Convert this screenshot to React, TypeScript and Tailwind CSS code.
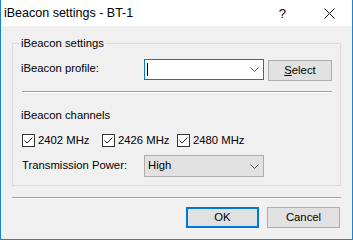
import React from "react";

const Check = () => (
  <span className="w-[13px] h-[13px] border border-[#333333] bg-white flex items-center justify-center shrink-0">
    <svg width="11" height="11" viewBox="0 0 11 11">
      <path d="M1.5 5.5 L4 8 L9.5 2.5" fill="none" stroke="#222" strokeWidth="1" />
    </svg>
  </span>
);

const Chevron = () => (
  <svg width="9" height="5" viewBox="0 0 9 5">
    <path d="M0.5 0.5 L4.5 4.5 L8.5 0.5" fill="none" stroke="#555" strokeWidth="1" />
  </svg>
);

export default function App() {
  return (
    <div
      className="w-[353px] h-[240px] bg-[#f0f0f0] border-l border-r border-b border-[#1883d7] flex flex-col text-[11.3px] text-black leading-none"
      style={{ fontFamily: '"Liberation Sans", Arial, sans-serif' }}
    >
      <div className="h-[26px] bg-white flex items-center shrink-0">
        <span className="pl-[3px] text-[12.5px]">iBeacon settings - BT-1</span>
        <span className="ml-auto text-[13px] mr-[38px]">?</span>
        <svg width="11" height="11" viewBox="0 0 11 11" className="mr-[17px]">
          <path d="M0.5 0.5 L10.5 10.5 M10.5 0.5 L0.5 10.5" stroke="#111" strokeWidth="1" />
        </svg>
      </div>
      <div className="px-[11px] flex flex-col">
        <fieldset className="mt-[9px] border border-[#dcdcdc] pl-[7px] pr-[8px] pb-[9px] h-[151px]">
          <legend className="px-[1px] h-[16px] leading-[16px]">iBeacon settings</legend>
          <div className="flex flex-col pt-[8px]">
            <div className="flex items-start h-[21px]">
              <span className="pl-[1px] w-[124px] h-[20px] flex items-center">iBeacon profile:</span>
              <div className="w-[120px] h-[21px] border border-[#0078d7] bg-white flex items-center">
                <span className="ml-[2px] w-[1px] h-[13px] bg-black" />
                <span className="ml-auto mr-[4px] flex"><Chevron /></span>
              </div>
              <button className="ml-[4px] mt-[1px] w-[64px] h-[21px] border border-[#adadad] bg-[#e1e1e1] flex items-center justify-center">
                <span><span className="underline">S</span>elect</span>
              </button>
            </div>
            <div className="mt-[11px] ml-[2px] h-[2px] border-t border-[#a0a0a0] border-b border-b-white" />
            <div className="mt-[16px] pl-[1px] h-[13px] flex items-center">iBeacon channels</div>
            <div className="mt-[12px] flex items-center h-[13px] pl-[2px]">
              <Check />
              <span className="ml-[3px] w-[64px] shrink-0">2402 MHz</span>
              <Check />
              <span className="ml-[3px] w-[59px] shrink-0">2426 MHz</span>
              <Check />
              <span className="ml-[3px]">2480 MHz</span>
            </div>
            <div className="mt-[8px] flex items-center">
              <span className="pl-[2px] w-[124px]">Transmission Power:</span>
              <div className="w-[120px] h-[22px] border border-[#adadad] bg-[#e1e1e1] flex items-center">
                <span className="ml-[3px]">High</span>
                <span className="ml-auto mr-[4px] flex"><Chevron /></span>
              </div>
            </div>
          </div>
        </fieldset>
        <div className="mt-[11px] h-[2px] border-t border-[#a0a0a0] border-b border-b-white" />
        <div className="mt-[8px] flex justify-end pr-[1px] gap-[8px]">
          <button className="w-[73px] h-[21px] border-2 border-[#0078d7] bg-[#e1e1e1] flex items-center justify-center">OK</button>
          <button className="w-[73px] h-[21px] border border-[#adadad] bg-[#e1e1e1] flex items-center justify-center">Cancel</button>
        </div>
      </div>
    </div>
  );
}
